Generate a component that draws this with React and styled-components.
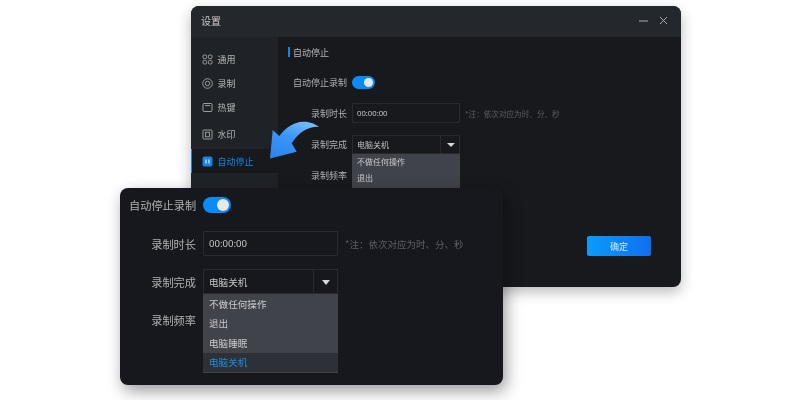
import React from 'react';
import styled, { createGlobalStyle } from 'styled-components';

const GlobalStyle = createGlobalStyle`
  html, body {
    margin: 0;
    background: #fff;
  }
  body {
    font-family: "Noto Sans CJK SC", "Noto Sans", sans-serif;
  }
`;

const Page = styled.div`
  position: relative;
  width: 800px;
  height: 400px;
  overflow: hidden;
  box-sizing: border-box;
  padding: 6px 0 0 191px;
  background: #fff;
  filter: blur(0.3px);
`;

const Window = styled.div`
  width: 490px;
  height: 281px;
  display: flex;
  flex-direction: column;
  border-radius: 8px;
  overflow: hidden;
  background: #17191d;
  box-shadow: 0 5px 14px rgba(0, 0, 0, 0.28);
`;

const TitleBar = styled.div`
  height: 31px;
  flex: none;
  box-sizing: border-box;
  display: flex;
  align-items: center;
  justify-content: space-between;
  padding: 0 13px 2px 10px;
  background: #24272c;
  color: #c9cbce;
  font-size: 10px;
`;

const WinButtons = styled.div`
  display: flex;
  gap: 11px;
  align-items: center;
`;

const Body = styled.div`
  flex: 1;
  display: flex;
  min-height: 0;
`;

const Sidebar = styled.div`
  width: 87px;
  flex: none;
  box-sizing: border-box;
  padding-top: 10px;
  background: #1f2226;
`;

const NavItem = styled.div`
  height: 24px;
  margin-top: ${(p) => (p.$gap ? '3px' : '0')};
  box-sizing: border-box;
  display: flex;
  align-items: center;
  gap: 5px;
  padding-left: 9.5px;
  font-size: 9px;
  color: ${(p) => (p.$active ? '#1684e0' : '#b4b6b9')};
  background: ${(p) => (p.$active ? '#17191d' : 'transparent')};
  border-left: 1px solid ${(p) => (p.$active ? '#1684e0' : 'transparent')};
  svg {
    flex: none;
  }
`;

const Content = styled.div`
  flex: 1;
  display: flex;
  flex-direction: column;
  padding: 10px 30px 31px 10px;
`;

const SectionTitle = styled.div`
  display: flex;
  align-items: center;
  gap: 3px;
  height: 10px;
  font-size: 9px;
  color: #b4b6b9;
  &::before {
    content: '';
    width: 2px;
    height: 10px;
    background: #1684e0;
  }
`;

const Form = styled.div`
  display: flex;
  flex-direction: column;
  gap: ${(p) => (p.$big ? '13px' : '11px')};
  margin-top: ${(p) => (p.$big ? '0' : '15px')};
`;

const Row = styled.div`
  display: flex;
  align-items: center;
  height: ${(p) => (p.$big ? (p.$tall ? '26px' : '25px') : '20px')};
  gap: ${(p) => (p.$big ? '7px' : '5px')};
`;

const Label = styled.div`
  width: ${(p) => (p.$big ? '67px' : '59px')};
  flex: none;
  text-align: right;
  white-space: nowrap;
  font-size: ${(p) => (p.$big ? '11.2px' : '9px')};
  color: #aeb0b3;
`;

const Toggle = styled.div`
  width: ${(p) => (p.$big ? '28px' : '23px')};
  height: ${(p) => (p.$big ? '16px' : '13px')};
  box-sizing: border-box;
  border-radius: 8px;
  padding: 2px;
  display: flex;
  justify-content: flex-end;
  background: #0a8cf8;
  &::after {
    content: '';
    height: 100%;
    aspect-ratio: 1;
    border-radius: 50%;
    background: #e6e8ea;
  }
`;

const Input = styled.div`
  width: ${(p) => (p.$big ? '135px' : '108px')};
  height: ${(p) => (p.$big ? '25px' : '20px')};
  flex: none;
  box-sizing: border-box;
  display: flex;
  align-items: center;
  padding-left: ${(p) => (p.$big ? '5px' : '4px')};
  border: 1px solid #282a2f;
  border-radius: 1px;
  font-family: "Noto Sans", sans-serif;
  font-size: ${(p) => (p.$big ? '9.6px' : '7.7px')};
  color: #c3c5c7;
`;

const Note = styled.div`
  white-space: nowrap;
  font-size: ${(p) => (p.$big ? '9.5px' : '7.6px')};
  color: #5c5e63;
`;

const Select = styled.div`
  position: relative;
  width: ${(p) => (p.$big ? '135px' : '108px')};
  height: ${(p) => (p.$big ? '25px' : '19px')};
  flex: none;
  box-sizing: border-box;
  display: flex;
  align-items: center;
  padding-left: ${(p) => (p.$big ? '5px' : '4px')};
  border: 1px solid #282a2f;
  font-size: ${(p) => (p.$big ? '9.6px' : '8px')};
  color: #c3c5c7;
`;

const Caret = styled.div`
  position: absolute;
  top: 0;
  right: 0;
  bottom: 0;
  width: ${(p) => (p.$big ? '24px' : '19px')};
  display: flex;
  align-items: center;
  justify-content: center;
  padding-left: 1px;
  box-sizing: border-box;
  border-left: 1px solid #282a2f;
  &::after {
    content: '';
    width: 0;
    height: 0;
    margin-top: 2px;
    border-style: solid;
    border-width: ${(p) => (p.$big ? '5px 4.5px 0' : '4px 4px 0')};
    border-color: #d4d5d7 transparent transparent;
  }
`;

const Dropdown = styled.div`
  position: absolute;
  top: calc(100% + 1px);
  left: -1px;
  right: -1px;
  z-index: 1;
  padding-bottom: 1px;
  background: #41434b;
`;

const Option = styled.div`
  height: ${(p) => (p.$big ? '19.5px' : '16px')};
  display: flex;
  align-items: center;
  padding-left: ${(p) => (p.$big ? '6px' : '5px')};
  white-space: nowrap;
  font-size: ${(p) => (p.$big ? '9.6px' : '8px')};
  color: ${(p) => (p.$active ? '#1a8ddb' : '#c9cacd')};
  background: ${(p) => (p.$active ? '#2d3036' : 'transparent')};
`;

const ConfirmButton = styled.button`
  margin-top: auto;
  align-self: flex-end;
  width: 64px;
  height: 20px;
  padding: 0;
  border: none;
  border-radius: 2px;
  background: linear-gradient(90deg, #0c9bfb, #0f6fee);
  color: #d7e9fb;
  font-family: inherit;
  font-size: 9px;
`;

const FrontPanel = styled.div`
  position: absolute;
  left: 120px;
  top: 188px;
  width: 383px;
  height: 197px;
  box-sizing: border-box;
  padding: 4px 0 0 9px;
  border-radius: 8px;
  background: #17181d;
  box-shadow: 3px 6px 16px rgba(0, 0, 0, 0.4);
  z-index: 2;
`;

const Arrow = styled.svg`
  position: absolute;
  left: 269px;
  top: 119px;
  z-index: 3;
`;

const options = ['不做任何操作', '退出', '电脑睡眠', '电脑关机'];

function GridIcon() {
  return (
    <svg width="11" height="11" viewBox="0 0 11 11" fill="none" stroke="#a8aaad" strokeWidth="0.9">
      <rect x="1" y="1" width="3.6" height="3.6" rx="1.2" />
      <rect x="6.4" y="1" width="3.6" height="3.6" rx="1.2" />
      <rect x="1" y="6.4" width="3.6" height="3.6" rx="1.2" />
      <rect x="6.4" y="6.4" width="3.6" height="3.6" rx="1.2" />
    </svg>
  );
}

function RecordIcon() {
  return (
    <svg width="11" height="11" viewBox="0 0 11 11" fill="none" stroke="#a8aaad" strokeWidth="0.9">
      <circle cx="5.5" cy="5.5" r="4.8" />
      <circle cx="5.5" cy="5.5" r="2.2" />
    </svg>
  );
}

function KeyIcon() {
  return (
    <svg width="11" height="11" viewBox="0 0 11 11" fill="none" stroke="#a8aaad" strokeWidth="0.9">
      <rect x="1" y="1.5" width="9" height="8" rx="1" />
      <path d="M3 3.6h5" />
    </svg>
  );
}

function WatermarkIcon() {
  return (
    <svg width="11" height="11" viewBox="0 0 11 11" fill="none" stroke="#a8aaad" strokeWidth="0.9">
      <rect x="1" y="1" width="9" height="9" rx="0.8" />
      <rect x="3.6" y="3.2" width="3.8" height="4.6" />
    </svg>
  );
}

function StopIcon() {
  return (
    <svg width="11" height="11" viewBox="0 0 11 11">
      <rect x="0.5" y="0.5" width="10" height="10" rx="2" fill="#1684e0" />
      <path d="M4 3.6v3.8M7 3.6v3.8" stroke="#dcebf9" strokeWidth="1.2" />
    </svg>
  );
}

function AutoStopForm({ big }) {
  return (
    <Form $big={big}>
      <Row $big={big} $tall>
        <Label $big={big}>自动停止录制</Label>
        <Toggle $big={big} />
      </Row>
      <Row $big={big}>
        <Label $big={big}>录制时长</Label>
        <Input $big={big}>00:00:00</Input>
        <Note $big={big}>*注：依次对应为时、分、秒</Note>
      </Row>
      <Row $big={big}>
        <Label $big={big}>录制完成</Label>
        <Select $big={big}>
          电脑关机
          <Caret $big={big} />
          <Dropdown>
            {options.map((o, i) => (
              <Option key={o} $big={big} $active={i === 3}>
                {o}
              </Option>
            ))}
          </Dropdown>
        </Select>
      </Row>
      <Row $big={big}>
        <Label $big={big}>录制频率</Label>
      </Row>
    </Form>
  );
}

export default function App() {
  return (
    <Page>
      <GlobalStyle />
      <Window>
        <TitleBar>
          设置
          <WinButtons>
            <svg width="9" height="9" viewBox="0 0 9 9" stroke="#b9bbbe" strokeWidth="0.9">
              <path d="M0 5h9" />
            </svg>
            <svg width="9" height="9" viewBox="0 0 9 9" stroke="#b9bbbe" strokeWidth="0.9">
              <path d="M1 1l7 7M8 1l-7 7" />
            </svg>
          </WinButtons>
        </TitleBar>
        <Body>
          <Sidebar>
            <NavItem><GridIcon />通用</NavItem>
            <NavItem><RecordIcon />录制</NavItem>
            <NavItem><KeyIcon />热键</NavItem>
            <NavItem $gap><WatermarkIcon />水印</NavItem>
            <NavItem $gap $active><StopIcon />自动停止</NavItem>
          </Sidebar>
          <Content>
            <SectionTitle>自动停止</SectionTitle>
            <AutoStopForm />
            <ConfirmButton>确定</ConfirmButton>
          </Content>
        </Body>
      </Window>
      <Arrow width="52" height="42" viewBox="0 0 52 42">
        <defs>
          <linearGradient id="arrowFill" x1="0.75" y1="0" x2="0.15" y2="1">
            <stop offset="0" stopColor="#74bdfb" />
            <stop offset="0.45" stopColor="#3a97f5" />
            <stop offset="1" stopColor="#2a86ee" />
          </linearGradient>
        </defs>
        <path
          d="M1 39.5L3.7 11L10.3 17C16 9 25 3 34 2.7C41 2.5 46 5 50 7.7C41 7 30 12 22.7 24.3L27.7 32.7Z"
          fill="url(#arrowFill)"
        />
      </Arrow>
      <FrontPanel>
        <AutoStopForm big />
      </FrontPanel>
    </Page>
  );
}
